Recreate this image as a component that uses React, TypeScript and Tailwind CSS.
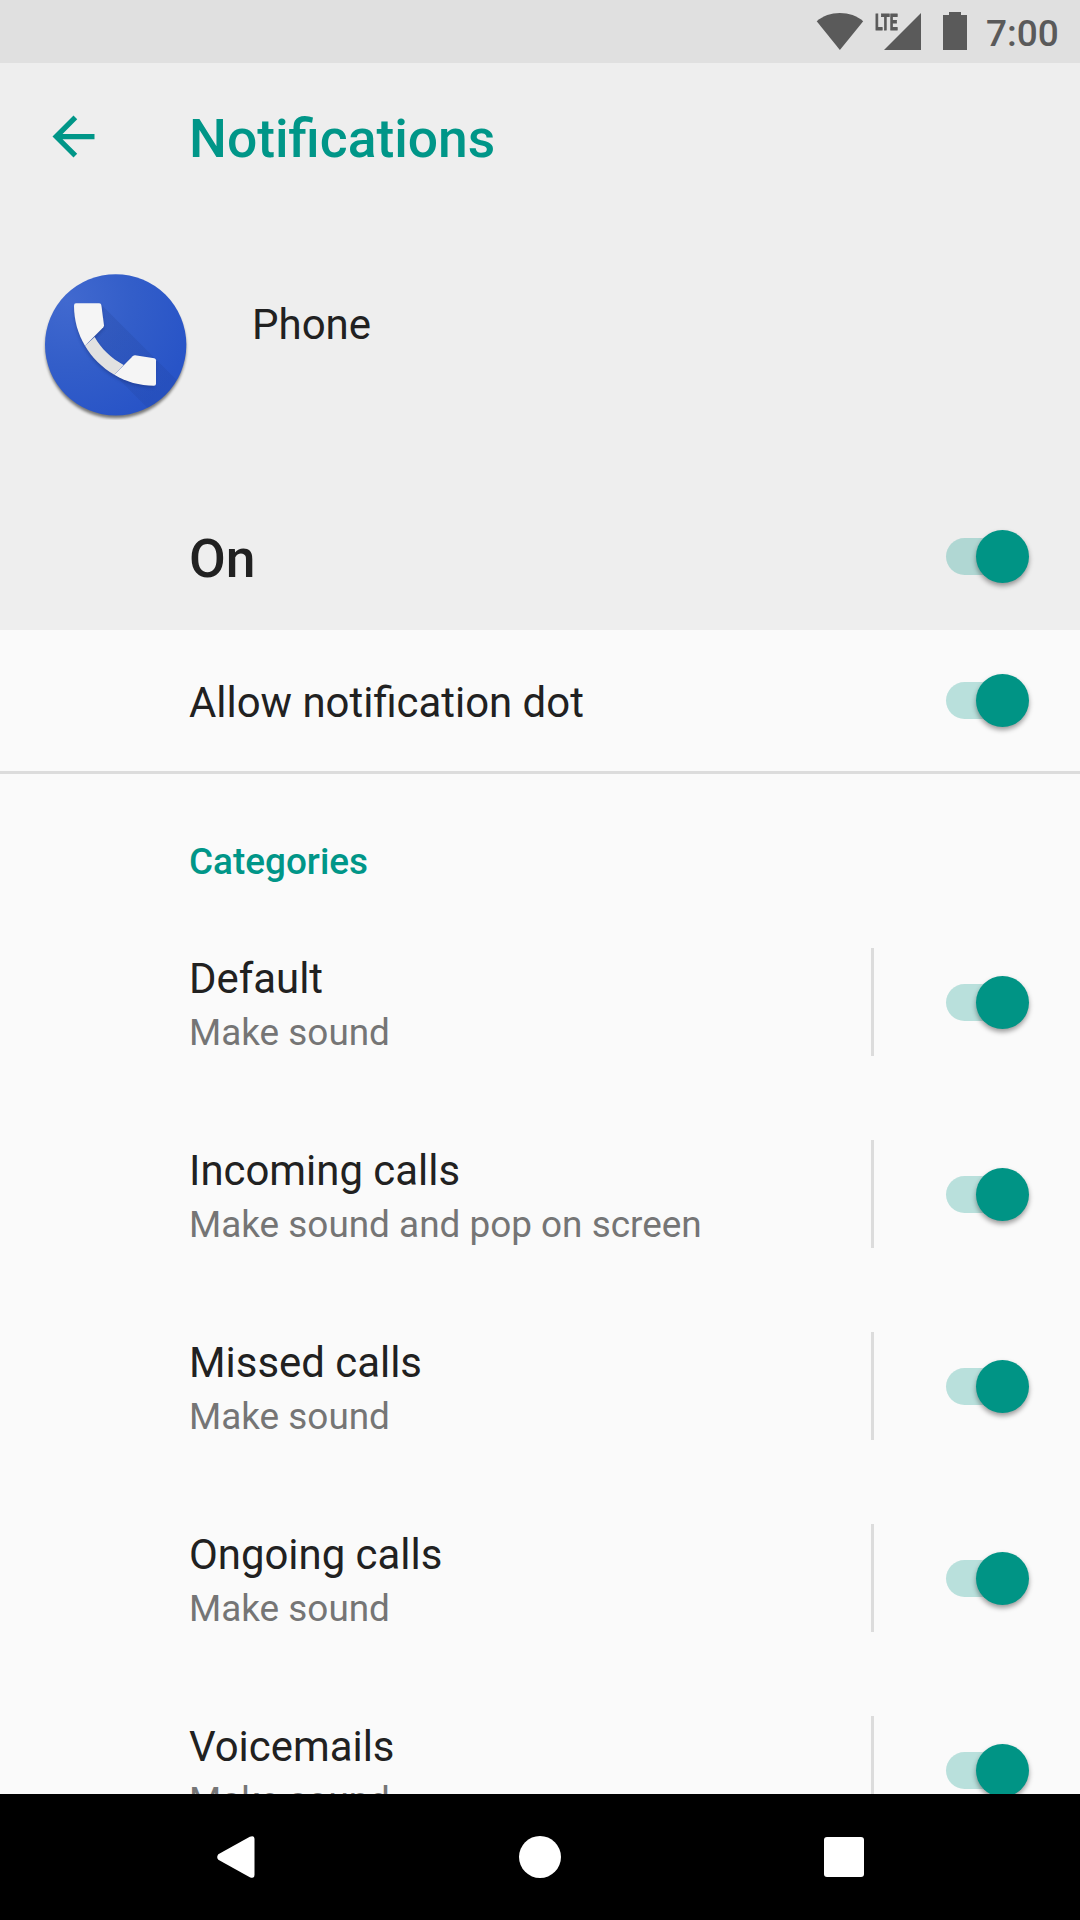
import React from 'react';

function Switch() {
  return (
    <span className="relative block h-[53px] w-[83px] shrink-0">
      <span className="absolute left-0 top-2 h-[37px] w-[66px] rounded-full bg-[#009688]/26" />
      <span className="absolute right-0 top-0 size-[53px] rounded-full bg-[#009485] shadow-[0_3px_5px_rgba(0,0,0,0.38)]" />
    </span>
  );
}

function StatusBar() {
  return (
    <div className="flex h-[63px] shrink-0 items-start bg-[#e0e0e0] text-[#5a5a5a]">
      <svg className="ml-[816px] mt-[13px] h-[37px] w-12 shrink-0" viewBox="0 0 48 37" fill="currentColor">
        <path d="M.7 8.2C7 3 15 .1 23.9.1S41 3 47.2 8.2L23.9 37z" />
      </svg>
      <div className="relative ml-[11px] h-[63px] w-[46px] shrink-0">
        <svg className="absolute left-[9px] top-[13px] h-[37px] w-[37px]" viewBox="0 0 37 37" fill="currentColor">
          <path d="M0 37H37V0z" />
        </svg>
        <span className="absolute left-0 top-[10px] origin-left scale-x-[0.62] text-[22.5px] leading-6 font-bold [-webkit-text-stroke:0.9px_currentColor]">LTE</span>
      </div>
      <svg className="ml-[22px] mt-3 h-[38px] w-6 shrink-0" viewBox="0 0 24 38" fill="currentColor">
        <path d="M0 3H6V0H18V3H24V38H0z" />
      </svg>
      <span className="ml-[19px] mt-[11px] text-[37px] leading-[45px] font-medium">7:00</span>
    </div>
  );
}

function PhoneIcon() {
  return (
    <svg className="ml-10 mt-[38px] size-[150px] shrink-0" viewBox="60 60 450 450">
      <defs>
        <radialGradient id="disc" gradientUnits="userSpaceOnUse" cx="140" cy="150" r="390">
          <stop offset="0" stopColor="#4169cf" />
          <stop offset="0.5" stopColor="#335ec9" />
          <stop offset="1" stopColor="#2854c7" />
        </radialGradient>
        <linearGradient id="cast" gradientUnits="userSpaceOnUse" x1="210" y1="220" x2="420" y2="430">
          <stop offset="0" stopColor="#1b3580" stopOpacity="0.17" />
          <stop offset="1" stopColor="#1b3580" stopOpacity="0.13" />
        </linearGradient>
        <filter id="soft" x="-10%" y="-10%" width="120%" height="125%">
          <feGaussianBlur stdDeviation="5" />
        </filter>
        <clipPath id="round">
          <circle cx="287" cy="284.5" r="212" />
        </clipPath>
      </defs>
      <circle cx="287" cy="294" r="211" fill="#000" opacity="0.5" filter="url(#soft)" />
      <circle cx="287" cy="284.5" r="212" fill="url(#disc)" />
      <g clipPath="url(#round)">
        <path d="M242 162 640 560H468L283 374 195 287 220 262z" fill="url(#cast)" />
        <path d="M162 168C162 300 270 407 402 407L408 327 342 316 311 345C275 325 243 295 224 261L252 229 242 160z" fill="#12296b" opacity="0.35" filter="url(#soft)" transform="translate(0 6)" />
      </g>
      <path d="M195 287C215 322 247 353 283 374L311 345C274 325 243 296 224 261z" fill="#e1e1e1" />
      <path d="M168 160H238Q243 160 244 165L252 226Q252 229 250 232L195 287C174 252 162 211 162 167Q162 160 168 160z" fill="#f5f5f5" />
      <path d="M283 374 338 319Q341 316 345 316L403 325Q408 326 408 331V401Q408 407 402 407C359 407 318 395 283 374z" fill="#f5f5f5" />
    </svg>
  );
}

type Category = { name: string; detail: string };

const categories: Category[] = [
  { name: 'Default', detail: 'Make sound' },
  { name: 'Incoming calls', detail: 'Make sound and pop on screen' },
  { name: 'Missed calls', detail: 'Make sound' },
  { name: 'Ongoing calls', detail: 'Make sound' },
  { name: 'Voicemails', detail: 'Make sound' },
];

function CategoryRow({ name, detail }: Category) {
  return (
    <div className="flex h-48 shrink-0 pl-[189px] pr-[51px]">
      <div className="grow pt-[49px]">
        <div className="text-[41.9px] leading-[48px]">{name}</div>
        <div className="mt-2 text-[36.9px] leading-[44px] text-[#757575]">{detail}</div>
      </div>
      <div className="mr-[72px] mt-[42px] h-[108px] w-[3px] bg-[#dcdcdc]" />
      <div className="mt-[70px]">
        <Switch />
      </div>
    </div>
  );
}

export default function App() {
  return (
    <div className="flex h-[1920px] w-[1080px] flex-col overflow-hidden bg-[#fafafa] font-['Roboto',sans-serif] text-[#212121]">
      <StatusBar />
      <header className="flex h-[567px] shrink-0 flex-col bg-[#eeeeee]">
        <div className="flex h-[147px] shrink-0 text-[#009688]">
          <svg className="ml-[42px] mt-[42px] size-[63px]" viewBox="0 0 24 24" fill="currentColor">
            <path d="M20 11H7.83l5.59-5.59L12 4l-8 8 8 8 1.41-1.41L7.83 13H20z" />
          </svg>
          <h1 className="ml-[84px] mt-[46px] text-[53.4px] leading-[60px] font-medium">Notifications</h1>
        </div>
        <div className="flex h-[273px] shrink-0 items-start pt-[22px]">
          <PhoneIcon />
          <div className="ml-[62px] mt-[69px] text-[42px] leading-[48px]">Phone</div>
        </div>
        <div className="flex h-[147px] items-start pl-[189px] pr-[51px]">
          <div className="mt-[46px] grow text-[53.4px] leading-[60px] font-medium">On</div>
          <div className="mt-[47px]">
            <Switch />
          </div>
        </div>
      </header>
      <main className="flex h-[1164px] shrink-0 flex-col overflow-hidden">
        <div className="flex h-36 shrink-0 items-start border-b-[3px] border-[#dcdcdc] pl-[189px] pr-[51px]">
          <div className="mt-[49px] grow text-[41.9px] leading-[48px]">Allow notification dot</div>
          <div className="mt-[44px]">
            <Switch />
          </div>
        </div>
        <h2 className="h-[132px] shrink-0 pl-[189px] pt-[66px] text-[36.9px] leading-[44px] font-medium text-[#009688]">Categories</h2>
        {categories.map((c) => (
          <CategoryRow key={c.name} {...c} />
        ))}
      </main>
      <nav className="flex h-[126px] shrink-0 items-center bg-black pl-[217px] text-white">
        <svg className="h-[42px] w-[37.5px]" viewBox="0 0 37.5 42" fill="currentColor">
          <path d="M1.3 18.2 32.8.8Q37.5-1.2 37.5 3.5V38.5Q37.5 43.2 32.8 41.2L1.3 23.8Q-.9 21 1.3 18.2z" />
        </svg>
        <span className="ml-[264.5px] size-[42px] rounded-full bg-white" />
        <span className="ml-[263px] size-[39.5px] rounded-[3px] bg-white" />
      </nav>
    </div>
  );
}
